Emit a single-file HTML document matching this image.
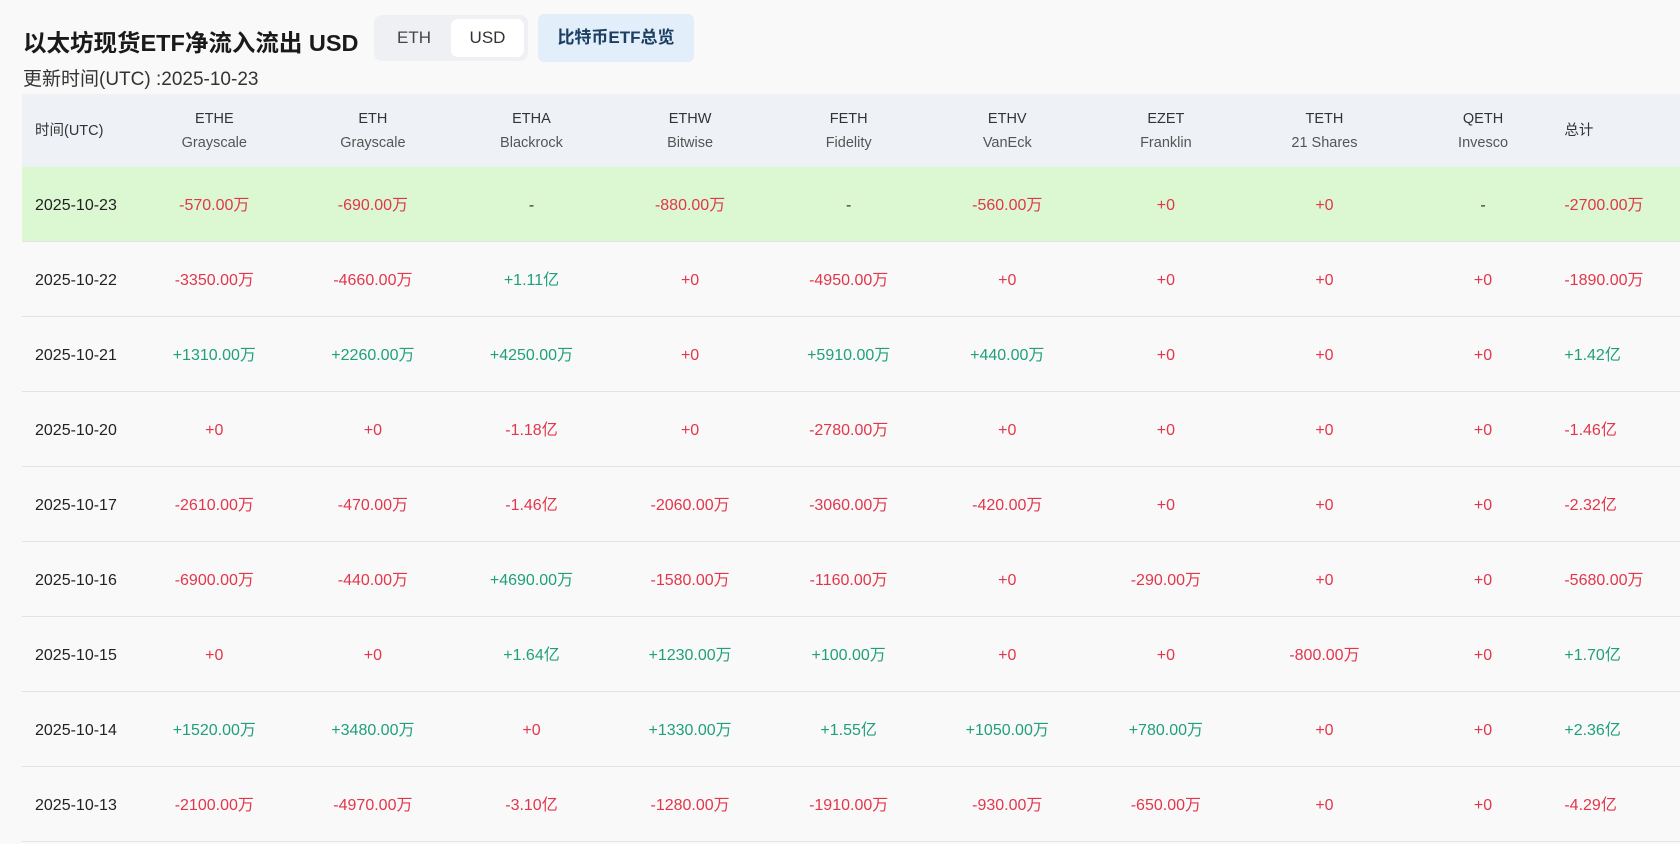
<!DOCTYPE html>
<html><head><meta charset="utf-8"><style>
body{margin:0;width:1680px;height:844px;overflow:hidden;background:#f9f9fa;font-family:"Liberation Sans","Noto Sans CJK SC",sans-serif;color:#222}
.title{position:absolute;left:23px;top:28px;font-size:23.5px;font-weight:bold;color:#1a1a1a;line-height:30px}
.sub{position:absolute;left:23px;top:68px;font-size:19px;color:#333;line-height:24px}
.tog{position:absolute;left:374px;top:15px;width:154px;height:46px;background:#eef0f3;border-radius:8px}
.tog span{position:absolute;top:4px;height:38px;line-height:38px;font-size:17px;color:#444;text-align:center}
.tog .a{left:4px;width:72px}
.tog .b{left:77px;width:73px;background:#fff;border-radius:7px;color:#333}
.btc{position:absolute;left:538px;top:14px;width:156px;height:48px;line-height:48px;background:#e2eef9;border-radius:6px;text-align:center;font-weight:bold;font-size:17px;color:#1d3e63}
table{position:absolute;left:22px;top:94px;border-collapse:collapse;table-layout:fixed;width:1658px}
th{background:#eef2f6;height:73px;font-weight:normal;font-size:14.5px;color:#333;line-height:24px;padding:0}
th small{font-size:14.5px;color:#555}
td{height:70px;border-bottom:1px solid #e3e3e3;text-align:center;font-size:16px;padding:4px 0 0 0;line-height:20px;vertical-align:middle}
td:first-child,th:first-child{text-align:left;padding-left:13px}
td:last-child,th:last-child{text-align:left;padding-left:2px}
tr.hl td{background:#dbf8d2}
.r{color:#e2364a}.g{color:#1fa07a}.k{color:#333}
</style></head><body>
<div class="title">以太坊现货ETF净流入流出 USD</div>
<div class="sub">更新时间(UTC) :2025-10-23</div>
<div class="tog"><span class="a">ETH</span><span class="b">USD</span></div>
<div class="btc">比特币ETF总览</div>
<table>
<colgroup><col style="width:113px"><col span="9" style="width:158.6px"><col></colgroup>
<tr><th>时间(UTC)</th><th>ETHE<br><small>Grayscale</small></th><th>ETH<br><small>Grayscale</small></th><th>ETHA<br><small>Blackrock</small></th><th>ETHW<br><small>Bitwise</small></th><th>FETH<br><small>Fidelity</small></th><th>ETHV<br><small>VanEck</small></th><th>EZET<br><small>Franklin</small></th><th>TETH<br><small>21 Shares</small></th><th>QETH<br><small>Invesco</small></th><th>总计</th></tr>
<tr class="hl"><td>2025-10-23</td><td class="r">-570.00万</td><td class="r">-690.00万</td><td class="k">-</td><td class="r">-880.00万</td><td class="k">-</td><td class="r">-560.00万</td><td class="r">+0</td><td class="r">+0</td><td class="k">-</td><td class="r">-2700.00万</td></tr>
<tr><td>2025-10-22</td><td class="r">-3350.00万</td><td class="r">-4660.00万</td><td class="g">+1.11亿</td><td class="r">+0</td><td class="r">-4950.00万</td><td class="r">+0</td><td class="r">+0</td><td class="r">+0</td><td class="r">+0</td><td class="r">-1890.00万</td></tr>
<tr><td>2025-10-21</td><td class="g">+1310.00万</td><td class="g">+2260.00万</td><td class="g">+4250.00万</td><td class="r">+0</td><td class="g">+5910.00万</td><td class="g">+440.00万</td><td class="r">+0</td><td class="r">+0</td><td class="r">+0</td><td class="g">+1.42亿</td></tr>
<tr><td>2025-10-20</td><td class="r">+0</td><td class="r">+0</td><td class="r">-1.18亿</td><td class="r">+0</td><td class="r">-2780.00万</td><td class="r">+0</td><td class="r">+0</td><td class="r">+0</td><td class="r">+0</td><td class="r">-1.46亿</td></tr>
<tr><td>2025-10-17</td><td class="r">-2610.00万</td><td class="r">-470.00万</td><td class="r">-1.46亿</td><td class="r">-2060.00万</td><td class="r">-3060.00万</td><td class="r">-420.00万</td><td class="r">+0</td><td class="r">+0</td><td class="r">+0</td><td class="r">-2.32亿</td></tr>
<tr><td>2025-10-16</td><td class="r">-6900.00万</td><td class="r">-440.00万</td><td class="g">+4690.00万</td><td class="r">-1580.00万</td><td class="r">-1160.00万</td><td class="r">+0</td><td class="r">-290.00万</td><td class="r">+0</td><td class="r">+0</td><td class="r">-5680.00万</td></tr>
<tr><td>2025-10-15</td><td class="r">+0</td><td class="r">+0</td><td class="g">+1.64亿</td><td class="g">+1230.00万</td><td class="g">+100.00万</td><td class="r">+0</td><td class="r">+0</td><td class="r">-800.00万</td><td class="r">+0</td><td class="g">+1.70亿</td></tr>
<tr><td>2025-10-14</td><td class="g">+1520.00万</td><td class="g">+3480.00万</td><td class="r">+0</td><td class="g">+1330.00万</td><td class="g">+1.55亿</td><td class="g">+1050.00万</td><td class="g">+780.00万</td><td class="r">+0</td><td class="r">+0</td><td class="g">+2.36亿</td></tr>
<tr><td>2025-10-13</td><td class="r">-2100.00万</td><td class="r">-4970.00万</td><td class="r">-3.10亿</td><td class="r">-1280.00万</td><td class="r">-1910.00万</td><td class="r">-930.00万</td><td class="r">-650.00万</td><td class="r">+0</td><td class="r">+0</td><td class="r">-4.29亿</td></tr>
</table>
</body></html>
